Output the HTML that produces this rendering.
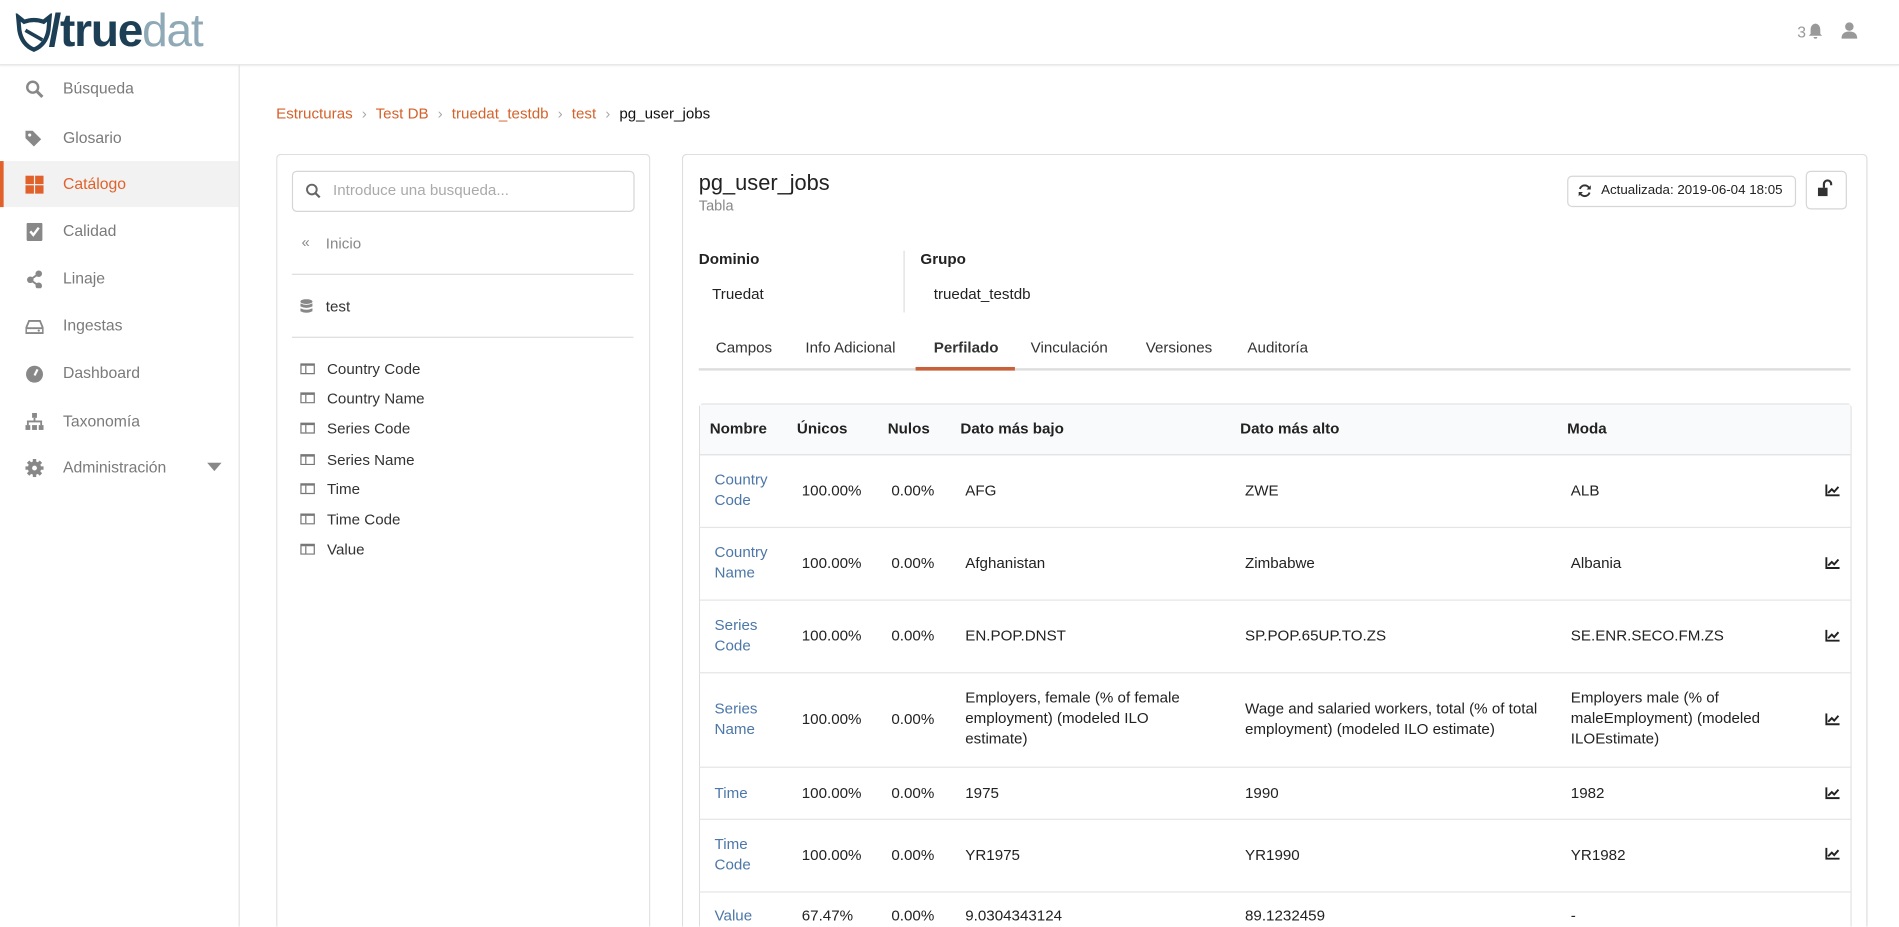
<!DOCTYPE html>
<html><head><meta charset="utf-8">
<style>
html,body{margin:0;padding:0;width:1899px;height:927px;overflow:hidden;background:#fff}
#w{position:absolute;left:0;top:0;width:1568px;height:765px;overflow:hidden;transform:scale(1.2111);transform-origin:0 0;font-family:"Liberation Sans",sans-serif;font-size:12.5px;color:#222}
.a{position:absolute;white-space:nowrap}
.hdr{position:absolute;left:0;top:0;width:1568px;height:53px;border-bottom:1px solid #e2e2e2;box-shadow:0 1px 2px rgba(0,0,0,.05)}
.side{position:absolute;left:0;top:54px;width:197px;height:711px;border-right:1px solid #e2e2e2}
.si{position:absolute;left:0;width:197px;height:38px;line-height:38px;color:#7a7a7a;font-size:13px}
.si .ic{position:absolute;left:21px;top:12px;width:15px;height:15px}
.si span{position:absolute;left:52px}
.bc{color:#d4622b}
.panel{position:absolute;border:1px solid #dedede;border-bottom:none;border-radius:4px 4px 0 0;background:#fff}
.li{position:absolute;left:270px;color:#333;font-size:12.5px}
.ti{position:absolute;left:248px;width:12px;height:9px;border:1.5px solid #777;border-top-width:2.5px;box-sizing:border-box}
.ti:after{content:"";position:absolute;left:3px;top:0;width:0;height:100%;border-left:1.5px solid #777}
.tab{position:absolute;top:280px;color:#333;font-size:12.5px}
.row{position:absolute;left:577px;width:951px;border-top:1px solid #e5e5e5}
.c{position:absolute;font-size:12.5px;color:#222;line-height:17px}
.lnk{color:#4c77a8}
.ch{position:absolute;left:1507px;width:12px;height:10px}
</style></head><body><div id="w">
<div class="hdr">
 <svg class="a" style="left:12px;top:11px" width="32" height="32" viewBox="0 0 32 32"><path d="M3 3 L8 7 Q16 4 24 7 L29 3 L28 14 Q26 26 16 30 Q6 26 4 14 Z" fill="none" stroke="#1c3f55" stroke-width="3.5"/><path d="M9 14 L23 22" stroke="#1c3f55" stroke-width="3"/></svg>
 <div class="a" style="left:40px;top:5px;font-size:38px;font-weight:bold;letter-spacing:-1px;color:#1c3f55">/true<span style="color:#8fa9b6;font-weight:normal">dat</span></div>
 <div class="a" style="left:1484px;top:19px;color:#999;font-size:13px">3</div>
 <svg class="a" style="left:1493px;top:19px" width="12" height="13" viewBox="0 0 12 13"><path d="M6 0.5 C3 1 2 3 2 6 L2 9 L0.5 10.5 L11.5 10.5 L10 9 L10 6 C10 3 9 1 6 0.5Z M4.5 11.5 h3 a1.5 1.5 0 0 1 -3 0" fill="#999"/></svg>
 <svg class="a" style="left:1520px;top:18px" width="14" height="14" viewBox="0 0 14 14"><circle cx="7" cy="4" r="3.5" fill="#999"/><path d="M0.5 14 Q0.5 8 7 8 Q13.5 8 13.5 14Z" fill="#999"/></svg>
</div>
<div class="side">
 <div class="si" style="top:0"><svg class="ic" viewBox="0 0 15 15"><circle cx="6" cy="6" r="4.5" fill="none" stroke="#888" stroke-width="2"/><path d="M9.5 9.5 L14 14" stroke="#888" stroke-width="2.5"/></svg><span>Búsqueda</span></div>
 <div class="si" style="top:41px"><svg class="ic" viewBox="0 0 15 15"><path d="M0 1 L6 1 L13 8 L7 14 L0 7Z" fill="#888"/><circle cx="3.5" cy="4.5" r="1.3" fill="#fff"/></svg><span>Glosario</span></div>
 <div class="si" style="top:79px;background:#f2f2f2;border-left:3px solid #e0622a;width:194px"><svg class="ic" style="left:18px" viewBox="0 0 15 15"><rect x="0" y="0" width="7" height="7" fill="#e0622a"/><rect x="8" y="0" width="7" height="7" fill="#e0622a"/><rect x="0" y="8" width="7" height="7" fill="#e0622a"/><rect x="8" y="8" width="7" height="7" fill="#e0622a"/></svg><span style="left:49px;color:#e0622a">Catálogo</span></div>
 <div class="si" style="top:118px"><svg class="ic" viewBox="0 0 15 15"><rect x="1" y="0" width="13" height="15" rx="1" fill="#888"/><path d="M4 7 L6.5 10 L11 4" stroke="#fff" stroke-width="2" fill="none"/></svg><span>Calidad</span></div>
 <div class="si" style="top:157px"><svg class="ic" viewBox="0 0 15 15"><circle cx="11" cy="3" r="2.7" fill="#888"/><circle cx="4" cy="8" r="2.7" fill="#888"/><circle cx="11" cy="13" r="2.7" fill="#888"/><path d="M11 3 L4 8 L11 13" stroke="#888" stroke-width="1.6" fill="none"/></svg><span>Linaje</span></div>
 <div class="si" style="top:196px"><svg class="ic" viewBox="0 0 15 15"><path d="M3 3 L12 3 L14.5 9 L14.5 13 L0.5 13 L0.5 9Z M0.5 9 L14.5 9" fill="none" stroke="#888" stroke-width="1.5"/><circle cx="11" cy="11" r="0.9" fill="#888"/></svg><span>Ingestas</span></div>
 <div class="si" style="top:235px"><svg class="ic" viewBox="0 0 15 15"><circle cx="7.5" cy="8" r="7" fill="#888"/><path d="M7.5 9 L10 4" stroke="#fff" stroke-width="1.8"/></svg><span>Dashboard</span></div>
 <div class="si" style="top:275px"><svg class="ic" viewBox="0 0 15 15"><rect x="5.5" y="0" width="4" height="4" fill="#888"/><path d="M7.5 4 V7 M2 10 V7 H13 V10" stroke="#888" stroke-width="1.5" fill="none"/><rect x="0" y="10" width="4" height="4" fill="#888"/><rect x="5.5" y="10" width="4" height="4" fill="#888"/><rect x="11" y="10" width="4" height="4" fill="#888"/></svg><span>Taxonomía</span></div>
 <div class="si" style="top:313px"><svg class="ic" viewBox="0 0 15 15"><circle cx="7.5" cy="7.5" r="5.5" fill="#888"/><path d="M7.5 0 V15 M0 7.5 H15 M2.2 2.2 L12.8 12.8 M12.8 2.2 L2.2 12.8" stroke="#888" stroke-width="2.8"/><circle cx="7.5" cy="7.5" r="2" fill="#fff"/></svg><span>Administración</span><svg class="a" style="left:171px;top:15px" width="12" height="7"><path d="M0 0 H12 L6 7Z" fill="#888"/></svg></div>
</div>

<div class="a" style="left:228px;top:87px;font-size:12.5px"><span class="bc">Estructuras</span> <span style="color:#aaa;margin:0 4px">›</span> <span class="bc">Test DB</span> <span style="color:#aaa;margin:0 4px">›</span> <span class="bc">truedat_testdb</span> <span style="color:#aaa;margin:0 4px">›</span> <span class="bc">test</span> <span style="color:#aaa;margin:0 4px">›</span> <span style="color:#111">pg_user_jobs</span></div>

<div class="panel" style="left:228px;top:127px;width:307px;height:638px"></div>
<div class="a" style="left:241px;top:141px;width:281px;height:32px;border:1px solid #d6d6d6;border-radius:4px"></div>
<svg class="a" style="left:252px;top:151px" width="13" height="13" viewBox="0 0 13 13"><circle cx="5.5" cy="5.5" r="4" fill="none" stroke="#666" stroke-width="1.6"/><path d="M8.5 8.5 L12 12" stroke="#666" stroke-width="1.8"/></svg>
<div class="a" style="left:275px;top:150px;color:#aaa">Introduce una busqueda...</div>
<div class="a" style="left:249px;top:193px;color:#888;font-size:12px">«</div>
<div class="a" style="left:269px;top:194px;color:#888">Inicio</div>
<div class="a" style="left:241px;top:226px;width:282px;border-top:1px solid #ddd"></div>
<svg class="a" style="left:248px;top:247px" width="10" height="12" viewBox="0 0 10 12"><ellipse cx="5" cy="2" rx="5" ry="2" fill="#888"/><path d="M0 3.5 Q5 6 10 3.5 V6 Q5 8.5 0 6Z M0 7.5 Q5 10 10 7.5 V10 Q5 12.5 0 10Z" fill="#888"/></svg>
<div class="a" style="left:269px;top:246px;color:#333">test</div>
<div class="a" style="left:241px;top:278px;width:282px;border-top:1px solid #ddd"></div>
<div class="ti" style="top:300px"></div><div class="li" style="top:298px">Country Code</div>
<div class="ti" style="top:324px"></div><div class="li" style="top:322px">Country Name</div>
<div class="ti" style="top:349px"></div><div class="li" style="top:347px">Series Code</div>
<div class="ti" style="top:375px"></div><div class="li" style="top:373px">Series Name</div>
<div class="ti" style="top:399px"></div><div class="li" style="top:397px">Time</div>
<div class="ti" style="top:424px"></div><div class="li" style="top:422px">Time Code</div>
<div class="ti" style="top:449px"></div><div class="li" style="top:447px">Value</div>

<div class="panel" style="left:563px;top:127px;width:977px;height:638px"></div>
<div class="a" style="left:577px;top:141px;font-size:18px;color:#222">pg_user_jobs</div>
<div class="a" style="left:577px;top:163px;font-size:12px;color:#888">Tabla</div>
<div class="a" style="left:1294px;top:145px;width:189px;height:26px;border:1px solid #d6d6d6;border-radius:4px;box-sizing:border-box"></div>
<svg class="a" style="left:1303px;top:152px" width="11" height="11" viewBox="0 0 11 11"><path d="M9.5 4 A4.2 4.2 0 0 0 1.5 4 M1.5 7 A4.2 4.2 0 0 0 9.5 7" fill="none" stroke="#333" stroke-width="1.6"/><path d="M10.5 1 V4.5 H7Z M0.5 10 V6.5 H4Z" fill="#333"/></svg>
<div class="a" style="left:1322px;top:151px;font-size:11px;color:#222">Actualizada: 2019-06-04 18:05</div>
<div class="a" style="left:1491px;top:141px;width:34px;height:32px;border:1px solid #d6d6d6;border-radius:4px;box-sizing:border-box"></div>
<svg class="a" style="left:1501px;top:148px" width="12" height="14" viewBox="0 0 12 14"><path d="M5 7 V4 A3 3 0 0 1 11 4 V5" fill="none" stroke="#333" stroke-width="1.8"/><rect x="0" y="7" width="8" height="7" fill="#333"/></svg>

<div class="a" style="left:577px;top:207px;font-weight:bold;font-size:12.5px">Dominio</div>
<div class="a" style="left:760px;top:207px;font-weight:bold;font-size:12.5px">Grupo</div>
<div class="a" style="left:746px;top:207px;height:51px;border-left:1px solid #ddd"></div>
<div class="a" style="left:588px;top:236px">Truedat</div>
<div class="a" style="left:771px;top:236px">truedat_testdb</div>

<div class="a" style="left:577px;top:304px;width:951px;border-top:2px solid #ddd"></div>
<div class="a" style="left:756px;top:303px;width:82px;border-top:3px solid #c8613a"></div>
<div class="tab" style="left:591px">Campos</div>
<div class="tab" style="left:665px">Info Adicional</div>
<div class="tab" style="left:771px;font-weight:bold">Perfilado</div>
<div class="tab" style="left:851px">Vinculación</div>
<div class="tab" style="left:946px">Versiones</div>
<div class="tab" style="left:1030px">Auditoría</div>

<div class="a" style="left:577px;top:333px;width:950px;height:432px;border:1px solid #dedede;border-bottom:none;border-radius:4px 4px 0 0"></div>
<div class="a" style="left:578px;top:334px;width:950px;height:41px;background:#f9fafb;border-bottom:1px solid #e0e0e0"></div>
<div class="c" style="left:586px;top:346px;font-weight:bold">Nombre</div>
<div class="c" style="left:658px;top:346px;font-weight:bold">Únicos</div>
<div class="c" style="left:733px;top:346px;font-weight:bold">Nulos</div>
<div class="c" style="left:793px;top:346px;font-weight:bold">Dato más bajo</div>
<div class="c" style="left:1024px;top:346px;font-weight:bold">Dato más alto</div>
<div class="c" style="left:1294px;top:346px;font-weight:bold">Moda</div>

<div class="row" style="top:435px"></div><div class="row" style="top:495px"></div><div class="row" style="top:555px"></div><div class="row" style="top:633px"></div><div class="row" style="top:676px"></div><div class="row" style="top:736px"></div>

<div class="c lnk" style="left:590px;top:388px">Country<br>Code</div>
<div class="c" style="left:662px;top:397px">100.00%</div><div class="c" style="left:736px;top:397px">0.00%</div><div class="c" style="left:797px;top:397px">AFG</div><div class="c" style="left:1028px;top:397px">ZWE</div><div class="c" style="left:1297px;top:397px">ALB</div>

<div class="c lnk" style="left:590px;top:448px">Country<br>Name</div>
<div class="c" style="left:662px;top:457px">100.00%</div><div class="c" style="left:736px;top:457px">0.00%</div><div class="c" style="left:797px;top:457px">Afghanistan</div><div class="c" style="left:1028px;top:457px">Zimbabwe</div><div class="c" style="left:1297px;top:457px">Albania</div>

<div class="c lnk" style="left:590px;top:508px">Series<br>Code</div>
<div class="c" style="left:662px;top:517px">100.00%</div><div class="c" style="left:736px;top:517px">0.00%</div><div class="c" style="left:797px;top:517px">EN.POP.DNST</div><div class="c" style="left:1028px;top:517px">SP.POP.65UP.TO.ZS</div><div class="c" style="left:1297px;top:517px">SE.ENR.SECO.FM.ZS</div>

<div class="c lnk" style="left:590px;top:577px">Series<br>Name</div>
<div class="c" style="left:662px;top:586px">100.00%</div><div class="c" style="left:736px;top:586px">0.00%</div><div class="c" style="left:797px;top:568px">Employers, female (% of female<br>employment) (modeled ILO<br>estimate)</div><div class="c" style="left:1028px;top:577px">Wage and salaried workers, total (% of total<br>employment) (modeled ILO estimate)</div><div class="c" style="left:1297px;top:568px">Employers male (% of<br>maleEmployment) (modeled<br>ILOEstimate)</div>

<div class="c lnk" style="left:590px;top:647px">Time</div>
<div class="c" style="left:662px;top:647px">100.00%</div><div class="c" style="left:736px;top:647px">0.00%</div><div class="c" style="left:797px;top:647px">1975</div><div class="c" style="left:1028px;top:647px">1990</div><div class="c" style="left:1297px;top:647px">1982</div>

<div class="c lnk" style="left:590px;top:689px">Time<br>Code</div>
<div class="c" style="left:662px;top:698px">100.00%</div><div class="c" style="left:736px;top:698px">0.00%</div><div class="c" style="left:797px;top:698px">YR1975</div><div class="c" style="left:1028px;top:698px">YR1990</div><div class="c" style="left:1297px;top:698px">YR1982</div>

<div class="c lnk" style="left:590px;top:748px">Value</div>
<div class="c" style="left:662px;top:748px">67.47%</div><div class="c" style="left:736px;top:748px">0.00%</div><div class="c" style="left:797px;top:748px">9.0304343124</div><div class="c" style="left:1028px;top:748px">89.1232459</div><div class="c" style="left:1297px;top:748px">-</div>

<svg class="ch" style="top:400px" viewBox="0 0 12 10"><path d="M1 0 V9 H12" fill="none" stroke="#222" stroke-width="1.6"/><path d="M2.5 7 L5.5 4 L7.5 6 L11 2" fill="none" stroke="#222" stroke-width="1.6"/></svg>
<svg class="ch" style="top:460px" viewBox="0 0 12 10"><path d="M1 0 V9 H12" fill="none" stroke="#222" stroke-width="1.6"/><path d="M2.5 7 L5.5 4 L7.5 6 L11 2" fill="none" stroke="#222" stroke-width="1.6"/></svg>
<svg class="ch" style="top:520px" viewBox="0 0 12 10"><path d="M1 0 V9 H12" fill="none" stroke="#222" stroke-width="1.6"/><path d="M2.5 7 L5.5 4 L7.5 6 L11 2" fill="none" stroke="#222" stroke-width="1.6"/></svg>
<svg class="ch" style="top:589px" viewBox="0 0 12 10"><path d="M1 0 V9 H12" fill="none" stroke="#222" stroke-width="1.6"/><path d="M2.5 7 L5.5 4 L7.5 6 L11 2" fill="none" stroke="#222" stroke-width="1.6"/></svg>
<svg class="ch" style="top:650px" viewBox="0 0 12 10"><path d="M1 0 V9 H12" fill="none" stroke="#222" stroke-width="1.6"/><path d="M2.5 7 L5.5 4 L7.5 6 L11 2" fill="none" stroke="#222" stroke-width="1.6"/></svg>
<svg class="ch" style="top:700px" viewBox="0 0 12 10"><path d="M1 0 V9 H12" fill="none" stroke="#222" stroke-width="1.6"/><path d="M2.5 7 L5.5 4 L7.5 6 L11 2" fill="none" stroke="#222" stroke-width="1.6"/></svg>
</div></body></html>
